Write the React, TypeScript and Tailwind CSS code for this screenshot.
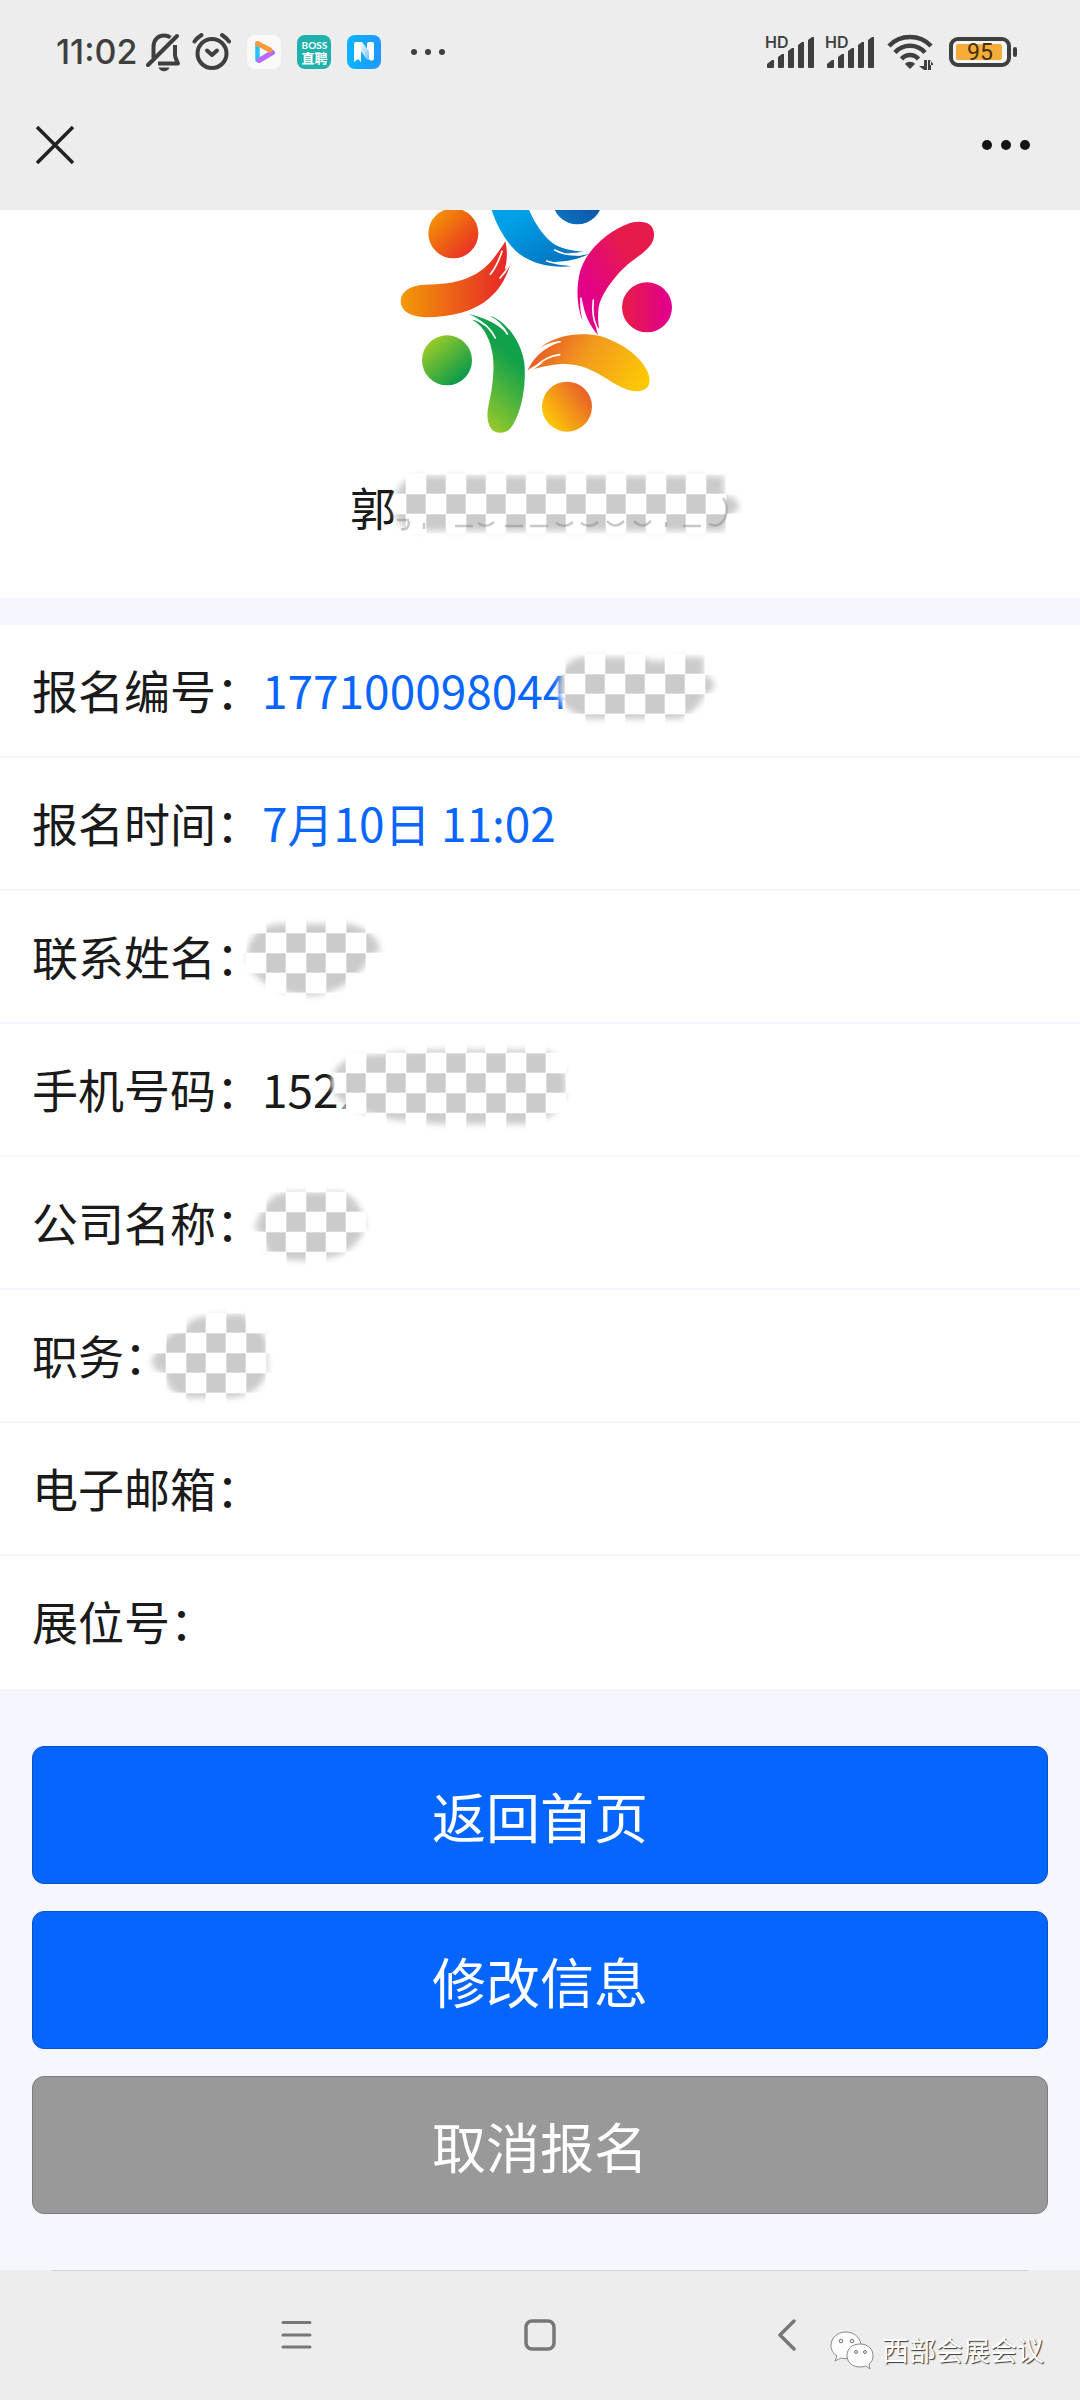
import React, { useId } from "react";

type Redaction = {
  box: [number, number, number, number];
  cell: [number, number];
  shape: string;
  place: string;
  extra?: React.ReactNode;
};

/* Checkerboard patch with feathered edges that hides private data. */
function Mosaic({ box, cell, shape, place, extra }: Redaction) {
  const id = useId();
  const [x, y, w, h] = box;
  return (
    <svg className={"absolute max-w-none " + place} width={w} height={h} viewBox={`${x} ${y} ${w} ${h}`} aria-hidden="true">
      <defs>
        <pattern id={id + "p"} patternUnits="userSpaceOnUse" x={cell[0]} y={cell[1]} width="40" height="40">
          <rect width="40" height="40" fill="#fff" />
          <rect width="20" height="20" fill="#dcdcdc" />
          <rect x="20" y="20" width="20" height="20" fill="#dcdcdc" />
          <rect x="1" y="1" width="18" height="18" fill="#cbcbcb" />
          <rect x="21" y="21" width="18" height="18" fill="#cbcbcb" />
        </pattern>
        <filter id={id + "b"} x="-20%" y="-20%" width="140%" height="140%">
          <feMorphology operator="erode" radius="2" />
          <feGaussianBlur stdDeviation="3" />
        </filter>
        <mask id={id + "m"} maskUnits="userSpaceOnUse" x={x} y={y} width={w} height={h}>
          <path d={shape} fill="#fff" filter={`url(#${id}b)`} />
        </mask>
      </defs>
      <rect x={x} y={y} width={w} height={h} fill={`url(#${id}p)`} mask={`url(#${id}m)`} />
      {extra}
    </svg>
  );
}

type Row = { label: string; value?: string; blue?: boolean; mosaic?: Redaction };

const rows: Row[] = [
  {
    label: "报名编号：",
    value: "177100098044",
    blue: true,
    mosaic: {
      box: [553, 645, 175, 90],
      cell: [585, 674],
      place: "left-[553px] top-5",
      shape: "M556 690C556 672 564 656 582 655H645C655 662 665 658 672 655H706V674C720 674 720 694 706 697C704 706 694 714 682 721H586C568 715 556 706 556 690Z",
    },
  },
  { label: "报名时间：", value: "7月10日 11:02", blue: true },
  {
    label: "联系姓名：",
    mosaic: {
      box: [236, 912, 155, 96],
      cell: [266, 953],
      place: "left-[236px] top-[21px]",
      shape: "M245 957C244 936 258 923 278 922H352C372 926 383 940 383 953C370 956 364 980 344 988C320 1002 296 999 278 992C256 984 246 972 245 957Z",
    },
  },
  {
    label: "手机号码：",
    value: "152",
    mosaic: {
      box: [322, 1038, 255, 98],
      cell: [346, 1073],
      place: "left-[322px] top-3.5",
      shape: "M329 1086C328 1066 343 1054 366 1053C390 1052 400 1048 430 1048H545C565 1052 569 1070 568 1090C568 1108 556 1122 525 1126H440C400 1124 334 1118 329 1086Z",
      extra: <path d="M341 1109l5-6v6z" fill="#999" />,
    },
  },
  {
    label: "公司名称：",
    mosaic: {
      box: [240, 1182, 136, 90],
      cell: [286, 1213],
      place: "left-[240px] top-6",
      shape: "M251 1229C260 1212 264 1192 287 1191H344C358 1195 368 1214 368 1228C364 1243 350 1258 330 1261C310 1266 280 1264 266 1257C262 1246 262 1238 251 1229Z",
    },
  },
  {
    label: "职务：",
    mosaic: {
      box: [140, 1304, 138, 104],
      cell: [186, 1353],
      place: "left-[140px] top-3.5",
      shape: "M150 1356C162 1346 160 1330 184 1326C188 1312 210 1313 248 1312C250 1328 269 1326 269 1342V1374C264 1392 248 1400 226 1400H190C170 1398 164 1388 163 1375C152 1374 148 1366 150 1356Z",
    },
  },
  { label: "电子邮箱：" },
  { label: "展位号：" },
];

function BellOff() {
  return (
    <svg width="40" height="40" viewBox="0 0 40 40" fill="none" stroke="#3f3f3f" strokeWidth="4" strokeLinejoin="round">
      <path d="M4 33 33 4" strokeLinecap="round" />
      <path d="M9.500 26V15C9.500 7 15 3.500 20 3.500c2.500 0 4.500.5 6.500 2" />
      <path d="M31 13v10c0 3 2 6 3 8.500H14" />
      <path d="M14.500 35.500c2 5 9 5 11 0z" fill="#3f3f3f" stroke="none" />
    </svg>
  );
}

function Alarm() {
  return (
    <svg width="40" height="40" viewBox="0 0 40 40" fill="none" stroke="#3f3f3f" strokeWidth="4" strokeLinecap="round">
      <circle cx="21" cy="21.500" r="14.500" />
      <path d="m16 18.500 5 4.500 5-4.500" strokeLinejoin="round" />
      <path d="M3.500 9.500c2-3 4-4.500 7-6.500M38 9.500c-2-3-4-4.500-7-6.500" />
    </svg>
  );
}

function VideoApp() {
  return (
    <svg width="34" height="34" viewBox="0 0 34 34">
      <rect width="34" height="34" rx="8" fill="#f9f9fa" />
      <path d="M10.500 9v16" stroke="#26c3fb" strokeWidth="4.500" strokeLinecap="round" />
      <path d="m12 25.500 13.500-8" stroke="#b76cf5" strokeWidth="5" strokeLinecap="round" />
      <path d="M10.500 8.500 23 15" stroke="#fb9a3b" strokeWidth="5" strokeLinecap="round" />
      <path d="M13 13v8l6-4z" fill="#fff" />
    </svg>
  );
}

function BossApp() {
  return (
    <div className="flex size-[34px] flex-col items-center justify-center rounded-lg bg-[#1fb1ac] font-bold text-white">
      <span className="font-['Lato'] text-[10px] leading-[12px]">BOSS</span>
      <span className="text-[13px] leading-[14px]">直聘</span>
    </div>
  );
}

function NoteApp() {
  return (
    <svg width="34" height="34" viewBox="0 0 34 34">
      <defs>
        <linearGradient id="note" x1="0" x2="1">
          <stop stopColor="#0db4ff" />
          <stop offset="1" stopColor="#1d98ff" />
        </linearGradient>
        <linearGradient id="fold" x1="0" x2="1" y2="1">
          <stop stopColor="#fff" />
          <stop offset="1" stopColor="#6cc6ff" />
        </linearGradient>
      </defs>
      <rect width="34" height="34" rx="8" fill="url(#note)" />
      <path d="M20 9a2 2 0 0 1 2-2h3a2 2 0 0 1 2 2v14c0 3-3 3-4 2l-3-3z" fill="#fff" />
      <path d="M13 7h2l7 9v9c-2 0-3-1-4-3l-5-7z" fill="url(#fold)" />
      <path d="M7 9a2 2 0 0 1 2-2h5v20l-3-3-4 3z" fill="#fff" />
    </svg>
  );
}

function Signal() {
  return (
    <svg width="50" height="46" viewBox="0 -6 50 46" fill="#3f3f3f">
      <text x="0" y="13" fontFamily="Inter, sans-serif" fontWeight="600" fontSize="16">HD</text>
      <path d="M2 32v-3l5-4h2v7q0 1-1 1H3q-1 0-1-1zM13 32V22l4-3h2v13q0 1-1 1h-4q-1 0-1-1zM23 32V16l4-3h2v19q0 1-1 1h-4q-1 0-1-1zM33 32V10l4-3h2v25q0 1-1 1h-4q-1 0-1-1zM43 32V5l4-3h2v30q0 1-1 1h-4q-1 0-1-1z" />
    </svg>
  );
}

function Wifi() {
  return (
    <svg width="46" height="38" viewBox="0 0 46 38" fill="none" stroke="#3f3f3f" strokeWidth="4.500">
      <path d="M2 13C13 1 33 1 44 13M8 19.500c8-9 22-9 30 0M14.500 26c4.500-5.500 12.500-5.500 17 0" />
      <path d="M18 31c2-3 8-3 10 0l-5 5z" fill="#3f3f3f" stroke="none" />
      <path d="M37 27v10h3V27zM32 33l5 4v-4zM41 27v10h3V27zM43 27l4 5h-4z" fill="#3f3f3f" stroke="none" />
    </svg>
  );
}

function Battery() {
  return (
    <svg width="68" height="30" viewBox="0 0 68 30">
      <rect x="2" y="2" width="58" height="26" rx="7" fill="#f4f4f4" stroke="#3f3f3f" strokeWidth="4" />
      <rect x="7" y="7" width="46" height="16" rx="2" fill="#f6ad37" />
      <rect x="64" y="10" width="4" height="10" rx="2" fill="#3f3f3f" />
      <text x="31" y="23" textAnchor="middle" fontFamily="Roboto, sans-serif" fontWeight="400" fontSize="23" fill="#40300f">95</text>
    </svg>
  );
}

function PeopleLogo() {
  return (
    <svg className="mx-auto block" width="320" height="233" viewBox="0 60 960 699" role="img" aria-label="logo">
      <defs>
        <linearGradient id="or" x1="0" y1="0" x2="1" y2="1">
          <stop stopColor="#f6a100" />
          <stop offset="1" stopColor="#e7202b" />
        </linearGradient>
        <linearGradient id="orArm" x1="0" y1="0.500" x2="1" y2="0.500">
          <stop stopColor="#f39a07" />
          <stop offset="1" stopColor="#e6222a" />
        </linearGradient>
        <linearGradient id="bl" x1="0" y1="0" x2="1" y2="1">
          <stop offset="0.300" stopColor="#009fe6" />
          <stop offset="1" stopColor="#0466b4" />
        </linearGradient>
        <linearGradient id="blDot" x1="0" y1="1" x2="1" y2="0">
          <stop stopColor="#0a7ac6" />
          <stop offset="1" stopColor="#123d94" />
        </linearGradient>
        <linearGradient id="pk" x1="0.700" y1="0.300" x2="0.200" y2="0.700">
          <stop stopColor="#e61b4c" />
          <stop offset="1" stopColor="#e3008a" />
        </linearGradient>
        <linearGradient id="pkDot">
          <stop offset="0.100" stopColor="#e61b4c" />
          <stop offset="0.900" stopColor="#e3008a" />
        </linearGradient>
        <linearGradient id="gn" x1="0.600" y1="0.300" x2="0.300" y2="1">
          <stop stopColor="#12a14b" />
          <stop offset="1" stopColor="#a2cd27" />
        </linearGradient>
        <linearGradient id="gnDot" x1="0.100" y1="0.100" x2="0.800" y2="0.900">
          <stop stopColor="#a2cd27" />
          <stop offset="1" stopColor="#089a4b" />
        </linearGradient>
        <linearGradient id="ye" x1="0" y1="0.500" x2="1" y2="0.800">
          <stop stopColor="#e75b26" />
          <stop offset="0.400" stopColor="#f29a1d" />
          <stop offset="1" stopColor="#fdcb05" />
        </linearGradient>
        <linearGradient id="yeDot" x1="0.100" y1="0.800" x2="0.900" y2="0.200">
          <stop stopColor="#fdc806" />
          <stop offset="1" stopColor="#e9602a" />
        </linearGradient>
      </defs>
      <circle cx="220" cy="130" r="75" fill="url(#or)" />
      <circle cx="592" cy="28" r="75" fill="url(#blDot)" />
      <circle cx="801" cy="352" r="75" fill="url(#pkDot)" />
      <circle cx="561" cy="650" r="75" fill="url(#yeDot)" />
      <circle cx="201" cy="511" r="75" fill="url(#gnDot)" />
      <path fill="url(#orArm)" d="M62 334C62 305 90 286 133 284C235 283 290 262 335 212C352 190 366 172 376 154C382 180 383 210 374 238Q384 231 393 218C378 265 360 298 325 327C283 362 220 382 135 382C92 380 62 364 62 334Z" />
      <path fill="url(#bl)" d="M325 20C335 80 372 155 418 192C466 226 525 234 574 229Q545 224 520 216C560 215 600 207 629 191Q612 196 598 197L560 189Q588 189 610 185C572 182 545 176 522 162C485 136 455 88 432 20Z" />
      <path fill="url(#pk)" d="M822 130C819 98 790 90 750 99C685 122 620 178 600 245C588 295 590 345 607 391Q604 360 607 330C612 370 630 410 655 436C650 424 648 414 648 406L657 417Q652 385 656 352C664 310 705 257 742 224C782 192 825 170 822 130Z" />
      <path fill="url(#gn)" d="M266 372C316 384 356 402 384 434Q362 400 330 377C380 395 424 455 433 520C440 590 422 680 389 718C375 732 345 732 335 718C315 690 322 660 334 605C342 545 345 510 330 460C318 422 298 400 276 389Q292 390 304 394Q288 380 266 372Z" />
      <path fill="url(#ye)" d="M442 542C460 505 488 475 540 456Q500 462 470 483C515 438 590 424 660 438C725 458 785 500 804 548C816 580 805 603 772 604C730 604 690 570 650 548C600 522 555 510 462 537Q478 525 490 518Q460 525 442 542Z" />
      <g fill="none" stroke="#fff" strokeWidth="5" strokeLinecap="round">
        <path d="M366 184C357 211 348 232 331 253M390 222C380 241 371 253 360 264" />
        <path d="M524 180C546 192 571 197 602 194M500 213C528 222 551 226 579 223" />
        <path d="M603 325C602 352 605 374 611 391M640 330C636 364 640 390 650 410" />
        <path d="M280 386C314 397 333 418 346 444M325 379C351 391 369 409 382 432" />
        <path d="M469 484C492 467 514 458 540 455M464 533C486 510 510 498 539 494" />
      </g>
    </svg>
  );
}

function WechatMark() {
  return (
    <svg width="44" height="40" viewBox="0 0 44 40" fill="#fdfdfd" stroke="#8a8a8a" strokeWidth="1">
      <path d="M16 2C7 2 1 8 1 15.500c0 4 2 8 6 10.500l-2 5 6-3c2 .5 4 .8 6 .5L31 14C29 6 23 2 16 2z" />
      <path d="M30 14c-8 0-13 5-13 11.500S22 37 30 37c2 0 4-.3 6-1l4 3-1-5c3-2 4-5 4-8.500C43 19 38 14 30 14z" />
      <g fill="#eee" stroke="#777">
        <circle cx="11" cy="11" r="1.800" />
        <circle cx="22" cy="11" r="1.800" />
        <circle cx="26" cy="22" r="1.500" />
        <circle cx="35" cy="22" r="1.500" />
      </g>
    </svg>
  );
}

const nameRedaction: Redaction = {
  box: [382, 464, 372, 82],
  cell: [406, 494],
  place: "-top-[9px] left-8",
  shape: "M392 508C392 488 400 474 422 474H726V494C744 493 746 514 732 516L726 533H420C400 533 392 522 392 508Z",
  extra: (
    <g fill="none" stroke="#777" strokeWidth="2.500" opacity="0.400">
      <path d="M397 520h12M401 529q8 2 8-8M424 529v-6M455 526h18M478 523q8 6 16-1M505 526h18M530 526h18M556 523q9 6 17-1M581 523q9 6 17-1M607 521q8 9 17 0M634 521q8 9 17 0M666 522v5M683 526h18" />
      <path d="M709 524q10 5 16-6q4-12-2-20" />
    </g>
  ),
};

export default function App() {
  return (
    <div className="flex min-h-screen flex-col bg-[#ededed] font-['Noto_Sans_CJK_SC',sans-serif] text-[#1a1a1a]">
      <header>
        <div className="flex h-[104px] items-center justify-between pr-[63px] pl-14">
          <div className="flex items-center">
            <div className="flex items-center gap-[7px]">
              <time className="font-['Inter'] text-[34px] leading-10 font-medium text-[#3f3f3f]">11:02</time>
              <BellOff />
              <Alarm />
            </div>
            <div className="ml-4 flex items-center gap-4">
              <VideoApp />
              <BossApp />
              <NoteApp />
            </div>
            <svg className="ml-[30px]" width="34" height="8" viewBox="0 0 34 8" fill="#3f3f3f">
              <circle cx="3" cy="4" r="3" />
              <circle cx="17" cy="4" r="3" />
              <circle cx="31" cy="4" r="3" />
            </svg>
          </div>
          <div className="flex items-center">
            <div className="flex gap-2.5">
              <Signal />
              <Signal />
            </div>
            <div className="ml-3">
              <Wifi />
            </div>
            <div className="ml-4">
              <Battery />
            </div>
          </div>
        </div>
        <nav className="flex h-[106px] items-center justify-between px-9 pb-6">
          <button aria-label="关闭">
            <svg width="38" height="38" viewBox="0 0 38 38" stroke="#222" strokeWidth="3.500">
              <path d="M1 1l36 36M37 1 1 37" />
            </svg>
          </button>
          <button aria-label="更多" className="pr-3.5">
            <svg width="48" height="12" viewBox="0 0 48 12" fill="#151515">
              <circle cx="5" cy="6" r="5" />
              <circle cx="24" cy="6" r="5" />
              <circle cx="43" cy="6" r="5" />
            </svg>
          </button>
        </nav>
      </header>

      <main className="flex-1 bg-[#f5f6ff]">
        <section className="bg-white pb-[59px]">
          <PeopleLogo />
          <div className="relative mx-auto mt-[30px] w-[380px] text-[46px] leading-[66px]">
            郭
            <Mosaic {...nameRedaction} />
          </div>
        </section>

        <dl className="mt-[27px] bg-white">
          {rows.map((r) => (
            <div key={r.label} className="relative flex h-[133px] items-center border-b-2 border-[#f5f6ff] pb-1 pl-8 text-[46px] leading-[66px] last:border-white">
              <dt>{r.label}</dt>
              <dd className={r.blue ? "text-[#0866ff]" : ""}>{r.value}</dd>
              {r.mosaic && <Mosaic {...r.mosaic} />}
            </div>
          ))}
        </dl>

        <div className="flex flex-col gap-[27px] px-8 pt-[57px] pb-14 text-[54px] text-white">
          <button className="h-[138px] rounded-xl border border-[#0d52c4] bg-[#0466ff]">返回首页</button>
          <button className="h-[138px] rounded-xl border border-[#0d52c4] bg-[#0466ff]">修改信息</button>
          <button className="h-[138px] rounded-xl border border-[#7c7c80] bg-[#999999]">取消报名</button>
        </div>
      </main>

      <footer className="relative h-[130px]">
        <div className="mx-[52px] h-px bg-[#d2d2d8]" />
        <div className="flex h-[128px] items-center justify-center">
          <button aria-label="最近任务" className="flex w-[244px] justify-center">
            <svg width="32" height="32" viewBox="0 0 32 32" stroke="#777" strokeWidth="3" strokeLinecap="round">
              <path d="M3 3.500h27M3 16h27M3 28h27" />
            </svg>
          </button>
          <button aria-label="主屏幕" className="flex w-[244px] justify-center">
            <svg width="32" height="32" viewBox="0 0 32 32" fill="none" stroke="#777" strokeWidth="3.500">
              <rect x="2" y="2" width="28" height="28" rx="6" />
            </svg>
          </button>
          <button aria-label="返回" className="flex w-[244px] justify-center">
            <svg width="32" height="32" viewBox="0 0 32 32" fill="none" stroke="#777" strokeWidth="3.500" strokeLinecap="round" strokeLinejoin="round">
              <path d="M26 2 12 16l14 14" />
            </svg>
          </button>
        </div>
        <div className="absolute right-9 bottom-[30px] flex items-center gap-2 text-[27px] leading-10 text-white [text-shadow:1px_1px_1px_#333]">
          <WechatMark />
          <span>西部会展会议</span>
        </div>
      </footer>
    </div>
  );
}
